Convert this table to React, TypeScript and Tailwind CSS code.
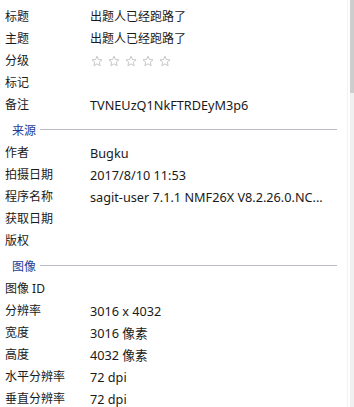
import React from 'react';

type Row = { label: string; value?: React.ReactNode; latin?: boolean };

const descriptionRows: Row[] = [
  { label: '标题', value: '出题人已经跑路了' },
  { label: '主题', value: '出题人已经跑路了' },
  { label: '分级', value: <Stars /> },
  { label: '标记' },
  { label: '备注', value: 'TVNEUzQ1NkFTRDEyM3p6', latin: true },
];

const originRows: Row[] = [
  { label: '作者', value: 'Bugku', latin: true },
  { label: '拍摄日期', value: '2017/8/10 11:53', latin: true },
  { label: '程序名称', value: 'sagit-user 7.1.1 NMF26X V8.2.26.0.NC...', latin: true },
  { label: '获取日期' },
  { label: '版权' },
];

const imageRows: Row[] = [
  { label: '图像 ID' },
  { label: '分辨率', value: '3016 x 4032', latin: true },
  { label: '宽度', value: '3016 像素', latin: true },
  { label: '高度', value: '4032 像素', latin: true },
  { label: '水平分辨率', value: '72 dpi', latin: true },
  { label: '垂直分辨率', value: '72 dpi', latin: true },
];

function Stars() {
  return (
    <div className="flex items-center gap-[5px] pl-px">
      {[0, 1, 2, 3, 4].map((i) => (
        <svg key={i} width="12" height="12" viewBox="0 0 24 24" fill="none">
          <path
            d="M12 2.5l2.9 6.6 7.1.6-5.4 4.7 1.6 7-6.2-3.7-6.2 3.7 1.6-7L2 9.7l7.1-.6z"
            stroke="#bdbdbd"
            strokeWidth="1.7"
            strokeLinejoin="round"
          />
        </svg>
      ))}
    </div>
  );
}

function PropRow({ label, value, latin }: Row) {
  return (
    <div className="grid grid-cols-[90px_1fr] h-[22px] items-center leading-[22px]">
      <span className="pl-[5px] text-[#1a1a1a] whitespace-nowrap">{label}</span>
      <span className={`text-[#1a1a1a] whitespace-nowrap ${latin ? 'text-[12.7px]' : ''}`}>
        {value}
      </span>
    </div>
  );
}

function GroupHeader({ title }: { title: string }) {
  return (
    <div className="h-[26px] flex items-center pl-[12px] pr-[10px] gap-[4px] leading-[26px]">
      <span className="text-[#1e3c96] whitespace-nowrap pt-[3px]">{title}</span>
      <div className="flex-1 h-px bg-[#b8bac8]" />
    </div>
  );
}

export default function App() {
  return (
    <div
      className="w-[354px] h-[407px] bg-white flex overflow-hidden text-[12px]"
      style={{ fontFamily: '"Noto Sans", "Noto Sans CJK SC", sans-serif' }}
    >
      <div className="flex-1 pt-[6px] border-r border-[#f3f3f3]">
        {descriptionRows.map((r) => (
          <PropRow key={r.label} {...r} />
        ))}
        <GroupHeader title="来源" />
        {originRows.map((r) => (
          <PropRow key={r.label} {...r} />
        ))}
        <GroupHeader title="图像" />
        {imageRows.map((r) => (
          <PropRow key={r.label} {...r} />
        ))}
      </div>
      <div className="w-[4px] ml-[2px] bg-[#f0f0f0] flex flex-col">
        <div className="h-[93px] bg-[#cdcdcd]" />
      </div>
    </div>
  );
}
